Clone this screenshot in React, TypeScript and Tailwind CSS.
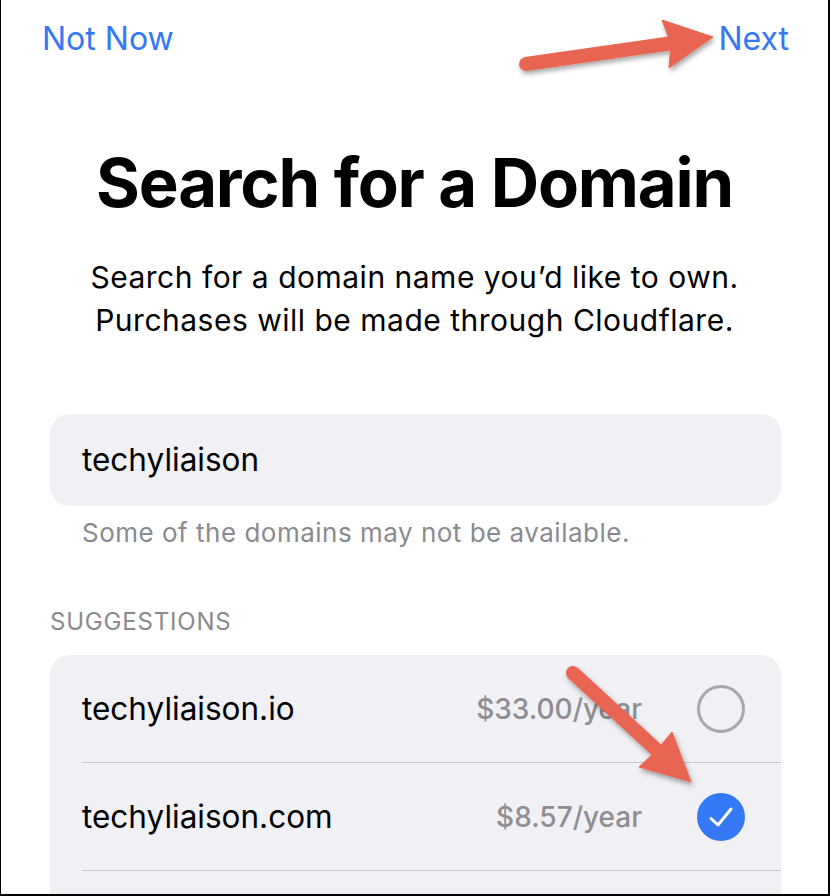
const suggestions = [
  { name: "techyliaison.io", price: "$33.00/year", selected: false },
  { name: "techyliaison.com", price: "$8.57/year", selected: true },
];

function Arrows() {
  return (
    <svg className="pointer-events-none absolute inset-0" width="830" height="896" viewBox="0 0 830 896">
      <defs>
        <filter id="sh" x="-20%" y="-20%" width="140%" height="140%">
          <feDropShadow dx="1.5" dy="3" stdDeviation="2.5" floodColor="#000" floodOpacity="0.35" />
        </filter>
      </defs>
      {/* top arrow -> Next */}
      <g filter="url(#sh)" fill="#e96552" stroke="#e96552">
        <line x1="525" y1="64" x2="672" y2="43" strokeWidth="14" strokeLinecap="round" />
        <polygon points="712,37 661,20 670,44 668,68" strokeWidth="1" strokeLinejoin="round" />
      </g>
      {/* lower arrow -> checkmark */}
      <g filter="url(#sh)" fill="#e96552" stroke="#e96552">
        <line x1="572" y1="673" x2="660" y2="754" strokeWidth="14" strokeLinecap="round" />
        <polygon points="690,782 671,732 655,751 638,767" strokeWidth="1" strokeLinejoin="round" />
      </g>
    </svg>
  );
}

function CheckMark() {
  return (
    <svg width="26" height="22" viewBox="0 0 26 22" fill="none">
      <path d="M3 12.5 L10 19 L23 3" stroke="#fff" strokeWidth="3" strokeLinecap="round" strokeLinejoin="round" />
    </svg>
  );
}

export default function App() {
  return (
    <div
      className="relative h-[896px] w-[830px] overflow-hidden border-b-2 border-l border-r-2 border-black bg-white"
      style={{ fontFamily: "Inter, 'Noto Sans', sans-serif" }}
    >
      {/* nav bar */}
      <div className="flex h-[78px] items-center justify-between pl-[41px] pr-[39px] text-[32px] text-[#3478f6]">
        <span>Not Now</span>
        <span>Next</span>
      </div>

      <h1 className="mt-[65px] text-center text-[67px] font-bold leading-[80px] tracking-[-1.2px] text-black">
        Search for a Domain
      </h1>

      <p className="mt-[33px] text-center text-[30px] leading-[43px] tracking-[0.5px] text-black">
        Search for a domain name you’d like to own.
        <br />
        Purchases will be made through Cloudflare.
      </p>

      <div className="ml-[49px] mt-[72px] flex h-[92px] w-[731px] items-center rounded-[20px] bg-[#f0f0f5] px-[32px] text-[31.5px] text-black">
        techyliaison
      </div>

      <p className="ml-[81px] mt-[12px] text-[26px] leading-[30px] tracking-[0.5px] text-[#8a8a8e]">
        Some of the domains may not be available.
      </p>

      <p className="ml-[49px] mt-[60px] text-[24px] uppercase leading-[28px] tracking-[0.8px] text-[#8a8a8e]">
        Suggestions
      </p>

      <div className="ml-[49px] mt-[19px] h-[260px] w-[731px] rounded-[20px] bg-[#f0f0f5]">
        {suggestions.map((s) => (
          <div key={s.name}>
            <div className="flex h-[107px] items-center pl-[32px] pr-[36px]">
              <span className="flex-1 text-[31.5px] text-black">{s.name}</span>
              <span className="mr-[55px] text-[28px] font-medium text-[#8e8e93]">{s.price}</span>
              {s.selected ? (
                <span className="flex h-[48px] w-[48px] items-center justify-center rounded-full bg-[#3478f6]">
                  <CheckMark />
                </span>
              ) : (
                <span className="h-[48px] w-[48px] rounded-full border-[3px] border-[#a9a9ab]" />
              )}
            </div>
            <div className="ml-[32px] h-px bg-[#c6c6c8]" />
          </div>
        ))}
      </div>

      <Arrows />
    </div>
  );
}
